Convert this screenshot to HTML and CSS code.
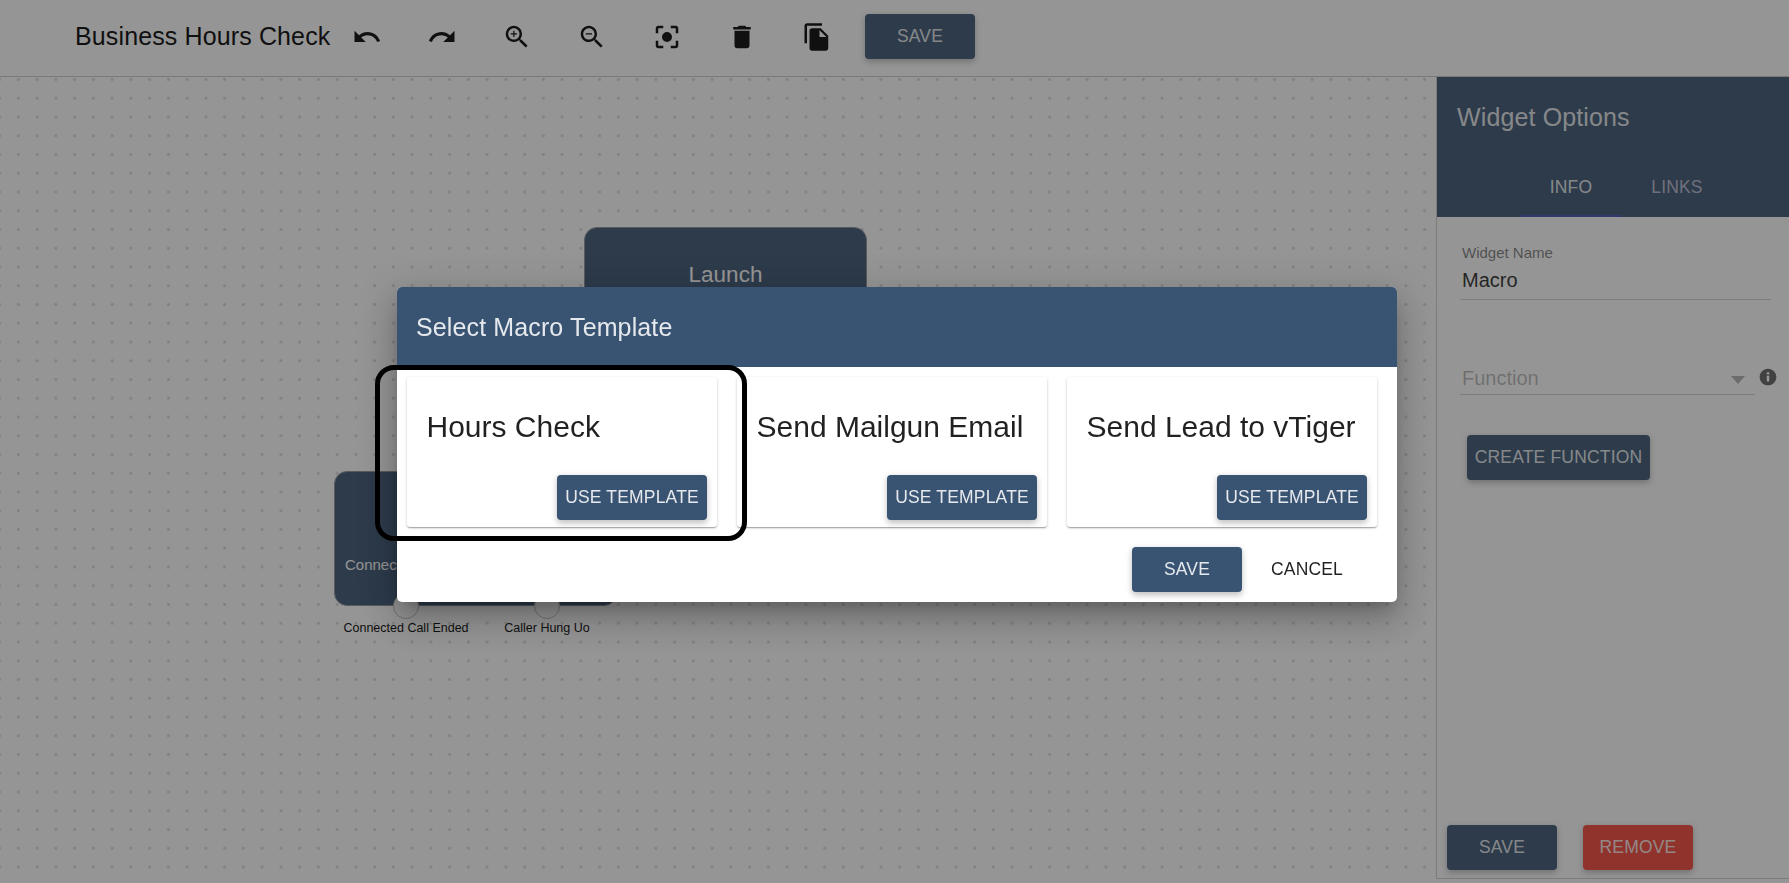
FILE: index.html
```html
<!DOCTYPE html>
<html lang="en">
<head>
<meta charset="utf-8">
<title>Business Hours Check</title>
<link rel="stylesheet" href="styles.css">
</head>
<body>
<div class="app">
  <header class="toolbar">
    <h1 class="flow-name">Business Hours Check</h1>
    <div class="tools">
      <svg class="icon" viewBox="0 0 24 24"><path d="M12.5 8c-2.65 0-5.05.99-6.9 2.6L2 7v9h9l-3.62-3.62c1.39-1.16 3.16-1.88 5.12-1.88 3.54 0 6.55 2.31 7.6 5.5l2.37-.78C21.08 11.03 17.15 8 12.5 8z"/></svg>
      <svg class="icon" viewBox="0 0 24 24"><path d="M18.4 10.6C16.55 8.99 14.15 8 11.5 8c-4.65 0-8.58 3.03-9.96 7.22L3.9 16c1.05-3.19 4.05-5.5 7.6-5.5 1.95 0 3.73.72 5.12 1.88L13 16h9V7l-3.6 3.6z"/></svg>
      <svg class="icon" viewBox="0 0 24 24"><path d="M15.5 14h-.79l-.28-.27C15.41 12.59 16 11.11 16 9.5 16 5.91 13.09 3 9.5 3S3 5.91 3 9.5 5.91 16 9.5 16c1.61 0 3.09-.59 4.23-1.57l.27.28v.79l5 4.99L20.49 19l-4.99-5zm-6 0C7.01 14 5 11.99 5 9.5S7.01 5 9.5 5 14 7.01 14 9.5 11.99 14 9.5 14zm2.5-4h-2v2H9v-2H7V9h2V7h1v2h2v1z"/></svg>
      <svg class="icon" viewBox="0 0 24 24"><path d="M15.5 14h-.79l-.28-.27C15.41 12.59 16 11.11 16 9.5 16 5.91 13.09 3 9.5 3S3 5.91 3 9.5 5.91 16 9.5 16c1.61 0 3.09-.59 4.23-1.57l.27.28v.79l5 4.99L20.49 19l-4.99-5zm-6 0C7.01 14 5 11.99 5 9.5S7.01 5 9.5 5 14 7.01 14 9.5 11.99 14 9.5 14zM7 9h5v1H7z"/></svg>
      <svg class="icon" viewBox="0 0 24 24"><path d="M5 15H3v4c0 1.1.9 2 2 2h4v-2H5v-4zM5 5h4V3H5c-1.1 0-2 .9-2 2v4h2V5zm14-2h-4v2h4v4h2V5c0-1.1-.9-2-2-2zm0 16h-4v2h4c1.1 0 2-.9 2-2v-4h-2v4zM12 8a4 4 0 1 0 0 8 4 4 0 0 0 0-8z"/></svg>
      <svg class="icon" viewBox="0 0 24 24"><path d="M6 19c0 1.1.9 2 2 2h8c1.1 0 2-.9 2-2V7H6v12zM19 4h-3.500l-1-1h-5l-1 1H5v2h14V4z"/></svg>
      <svg class="icon" viewBox="0 0 24 24"><path d="M16 1H4c-1.1 0-2 .9-2 2v14h2V3h12V1zm-1 4l6 6v10c0 1.1-.9 2-2 2H7.990C6.890 23 6 22.100 6 21l.010-14c0-1.100.890-2 1.990-2h7zm-1 7h5.500L14 6.500V12z"/></svg>
    </div>
    <button class="btn">SAVE</button>
  </header>

  <div class="workspace">
    <main class="canvas">
      <div class="node node-launch"><span class="node-title">Launch</span></div>
      <div class="node node-connect"><span class="node-text">Connect Call</span></div>
      <div class="port port-ended"><i class="port-dot"></i><span class="port-label">Connected Call Ended</span></div>
      <div class="port port-hung"><i class="port-dot"></i><span class="port-label">Caller Hung Uo</span></div>
    </main>

    <aside class="panel">
      <div class="panel-head">
        <h2 class="panel-title">Widget Options</h2>
        <nav class="tabs">
          <span class="tab tab-active">INFO</span>
          <span class="tab">LINKS</span>
        </nav>
      </div>
      <div class="panel-body">
        <div class="field">
          <span class="field-label">Widget Name</span>
          <span class="field-value">Macro</span>
        </div>
        <div class="select-row">
          <div class="select"><span>Function</span><i class="caret"></i></div>
          <svg class="info" viewBox="0 0 24 24"><path d="M12 2C6.480 2 2 6.480 2 12s4.480 10 10 10 10-4.480 10-10S17.520 2 12 2zm1.500 15.500h-3v-7h3v7zm0-8.500h-3V6.200h3V9z"/></svg>
        </div>
        <button class="btn btn-create">CREATE FUNCTION</button>
      </div>
      <div class="panel-foot">
        <button class="btn">SAVE</button>
        <button class="btn btn-danger">REMOVE</button>
      </div>
    </aside>
  </div>
</div>

<div class="backdrop">
  <section class="dialog">
    <h2 class="dialog-head">Select Macro Template</h2>
    <div class="cards">
      <article class="card"><h3 class="card-title">Hours Check</h3><button class="btn btn-wide">USE TEMPLATE</button></article>
      <article class="card"><h3 class="card-title">Send Mailgun Email</h3><button class="btn btn-wide">USE TEMPLATE</button></article>
      <article class="card"><h3 class="card-title">Send Lead to vTiger</h3><button class="btn btn-wide">USE TEMPLATE</button></article>
    </div>
    <footer class="dialog-foot">
      <button class="btn">SAVE</button>
      <button class="btn btn-flat">CANCEL</button>
    </footer>
  </section>
</div>
<div class="highlight"></div>
</body>
</html>
```
FILE: styles.css
```css
* { box-sizing: border-box; }
body {
  margin: 0;
  font-family: "Liberation Sans", Arial, sans-serif;
  color: rgba(0, 0, 0, 0.87);
  background: #fff;
  overflow: hidden;
}
h1, h2, h3 { margin: 0; font-weight: 400; }

.app { display: flex; flex-direction: column; height: 883px; }

.toolbar {
  display: flex;
  align-items: center;
  flex: none;
  height: 77px;
  padding: 0 0 3px 75px;
  border-bottom: 1px solid #cacaca;
}
.flow-name { width: 277px; font-size: 25px; letter-spacing: 0.125px; color: #000; white-space: nowrap; }
.tools { display: flex; gap: 45px; margin-right: 33px; padding-top: 1px; }
.icon { display: block; width: 30px; height: 30px; fill: #000; }

.btn {
  width: 110px;
  height: 45px;
  padding: 0;
  border: 0;
  border-radius: 4px;
  background: #395372;
  color: rgba(255, 255, 255, 0.87);
  font: 17.5px/45px "Liberation Sans", Arial, sans-serif;
  letter-spacing: 0.175px;
  text-align: center;
  white-space: nowrap;
  box-shadow: 0 2.5px 6px rgba(0, 0, 0, 0.26);
}
.toolbar .btn { margin-top: -1px; }
.btn-wide { width: 150px; }
.btn-danger { background: #f44336; }
.btn-create { width: 183px; }
.btn-flat { background: none; box-shadow: none; color: rgba(0, 0, 0, 0.87); }

.workspace { display: flex; flex: 1; min-height: 0; }

.canvas {
  position: relative;
  flex: 1;
  background-image: radial-gradient(circle at center, #d6d6d6 0, #dadada 1px, rgba(255, 255, 255, 0) 2px);
  background-size: 18.75px 18.75px;
  background-position: 9px -6.9px;
}
.node {
  position: absolute;
  width: 283px;
  height: 135px;
  border: 1px solid #8b8f95;
  border-radius: 13px;
  background: #395372;
  color: #fff;
}
.node-launch { left: 584px; top: 150px; text-align: center; }
.node-title { display: block; padding-top: 33px; font-size: 22.5px; line-height: 28px; }
.node-connect { left: 334px; top: 394px; }
.node-text { display: block; padding: 83px 0 0 10px; font-size: 15px; line-height: 20px; }
.port {
  position: absolute;
  top: 516px;
  display: flex;
  flex-direction: column;
  align-items: center;
  width: 160px;
}
.port-ended { left: 326px; }
.port-hung { left: 467px; }
.port-dot { width: 26px; height: 26px; border: 1px solid #bbb; border-radius: 50%; background: #fff; }
.port-label { padding-top: 1px; font-size: 12.5px; line-height: 16px; color: #000; white-space: nowrap; }

.panel {
  display: flex;
  flex-direction: column;
  width: 353px;
  height: 802px;
  border: solid #d0d0d0;
  border-width: 0 0 1px 1px;
  background: #fff;
}
.panel-head { height: 140px; background: #395372; color: rgba(255, 255, 255, 0.87); }
.panel-title { padding: 0 20px; height: 80px; font-size: 25px; line-height: 80px; letter-spacing: 0.125px; }
.tabs { display: flex; height: 60px; padding-left: 83px; }
.tab {
  width: 102px;
  border-bottom: 2px solid transparent;
  font-size: 17.5px;
  line-height: 60px;
  letter-spacing: 0.175px;
  text-align: center;
  color: #b9b9cf;
}
.tab + .tab { width: 110px; }
.tab-active { border-color: #3f51b5; color: rgba(255, 255, 255, 0.87); }
.panel-body { flex: 1; padding: 25px 0 0 23px; }
.field { display: flex; flex-direction: column; width: 311px; height: 58px; border-bottom: 1px solid #d3d3d3; padding-left: 2px; }
.field-label { font-size: 15px; line-height: 22px; color: rgba(0, 0, 0, 0.54); }
.field-value { font-size: 20px; line-height: 33px; }
.select-row { display: flex; gap: 3px; margin-top: 62px; }
.select {
  display: flex;
  align-items: center;
  justify-content: space-between;
  width: 295px;
  height: 33px;
  padding: 0 10px 0 2px;
  border-bottom: 1px solid #cfcfcf;
  font-size: 20px;
  color: rgba(0, 0, 0, 0.3);
}
.caret { margin-top: 3px; border: solid transparent; border-width: 8px 7px 0; border-top-color: #b0b0b0; }
.info { width: 20px; height: 20px; margin-top: 5px; fill: #5f5f5f; }
.btn-create { display: block; margin: 40px 0 0 7px; }
.panel-foot { display: flex; gap: 26px; padding: 0 0 8px 10px; }

.backdrop {
  position: fixed;
  inset: 0;
  display: flex;
  align-items: flex-start;
  padding: 287px 0 0 397px;
  background: rgba(33, 33, 33, 0.48);
}
.dialog {
  width: 1000px;
  height: 315px;
  border-radius: 5px;
  overflow: hidden;
  background: #fff;
  box-shadow: 0 9px 16px -5px rgba(0, 0, 0, 0.2), 0 20px 32px 2px rgba(0, 0, 0, 0.14), 0 7px 38px 6px rgba(0, 0, 0, 0.12);
}
.dialog-head {
  height: 80px;
  padding-left: 19px;
  background: #395372;
  color: rgba(255, 255, 255, 0.87);
  font-size: 25px;
  line-height: 80px;
  letter-spacing: 0.125px;
}
.cards { display: flex; gap: 20px; padding: 10px; }
.card {
  display: flex;
  flex-direction: column;
  justify-content: space-between;
  align-items: flex-end;
  width: 310px;
  height: 150px;
  padding: 30px 10px 7px 19.500px;
  border-radius: 3px;
  box-shadow: 0 1px 3px rgba(0, 0, 0, 0.2), 0 1px 1px rgba(0, 0, 0, 0.14), 0 2px 1px -1px rgba(0, 0, 0, 0.12);
}
.card-title { align-self: flex-start; font-size: 30px; line-height: 39px; white-space: nowrap; }
.dialog-foot { display: flex; gap: 10px; justify-content: flex-end; padding: 10px 35px 0 0; }

.highlight {
  position: absolute;
  left: 375px;
  top: 365px;
  width: 372px;
  height: 176px;
  border: 5px solid #000;
  border-radius: 19px;
}
```
